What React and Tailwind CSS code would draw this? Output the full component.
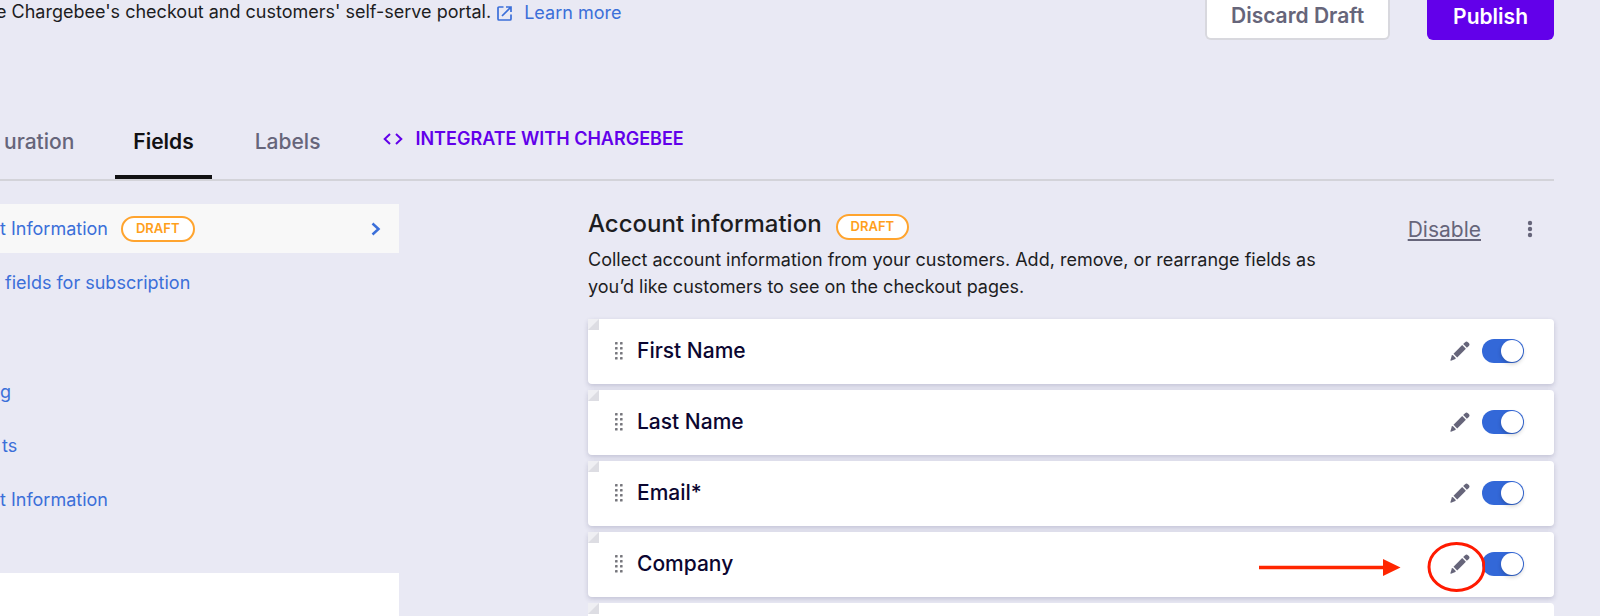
const fields = [
  { name: 'First Name' },
  { name: 'Last Name' },
  { name: 'Email*' },
  { name: 'Company', highlighted: true },
]

function OpenIcon() {
  return (
    <svg viewBox="0 0 15 15" className="h-[15px] w-[15px]" fill="none" stroke="currentColor" strokeWidth="1.7" aria-hidden="true">
      <path d="M6.500 1H2a1 1 0 0 0-1 1v11a1 1 0 0 0 1 1h11a1 1 0 0 0 1-1V8.500" />
      <path d="M9 1h5v5M14 1 5 10" />
    </svg>
  )
}

function CodeIcon() {
  return (
    <svg viewBox="0 0 20 12" className="h-3 w-5" fill="none" stroke="currentColor" strokeWidth="2" aria-hidden="true">
      <path d="M7 1 1.700 6 7 11M13 1l5.300 5L13 11" />
    </svg>
  )
}

function PencilIcon() {
  return (
    <svg viewBox="0 0 20 20" className="h-5 w-5" fill="currentColor" aria-hidden="true">
      <path d="M.4 19.300 1.800 14.400q.5-.7 1.200-.1l2.500 2.500q.6.700-.1 1.100L1 19.700q-.6.100-.6-.4z" />
      <path d="M3.500 12.800 12.200 4.100l3.700 3.700-8.700 8.700z" />
      <path d="m13.200 3.100 1.900-1.900a2 2 0 0 1 2.800 0l.9.9a2 2 0 0 1 0 2.800L16.900 6.800z" />
    </svg>
  )
}

function DragIcon() {
  return (
    <svg viewBox="0 0 8 18" className="h-[18px] w-2" fill="#77777d" aria-hidden="true">
      {[0, 5, 10, 15].map((y) => (
        <g key={y}>
          <rect x="0" y={y} width="2.6" height="2.6" rx=".6" />
          <rect x="5" y={y} width="2.6" height="2.6" rx=".6" />
        </g>
      ))}
    </svg>
  )
}

function DraftBadge() {
  return (
    <span className="flex h-[26px] items-center rounded-full border-2 border-[#ffa42e] bg-white px-[13px] text-[13px] font-semibold text-[#ff9f1c]">
      DRAFT
    </span>
  )
}

function Annotation() {
  return (
    <svg viewBox="0 0 226 50" className="pointer-events-none absolute right-[69px] top-[10px] h-[50px] w-[226px]" fill="none" aria-hidden="true">
      <path d="M0 25.500h125" stroke="#ff2600" strokeWidth="3.500" />
      <path d="M124 17v17L141.500 25.500z" fill="#ff2600" />
      <ellipse cx="197.500" cy="25" rx="27.500" ry="23.500" stroke="#ff1a00" strokeWidth="3" />
    </svg>
  )
}

function Fold() {
  return (
    <svg viewBox="0 0 11 11" className="absolute left-0 top-0 h-[11px] w-[11px]" aria-hidden="true">
      <path d="M0 0h11v11H0z" fill="#efeff3" />
      <path d="M11 0v11H0z" fill="#dddde3" />
    </svg>
  )
}

function FieldRow({ field }) {
  return (
    <li className="relative flex h-[65px] items-center rounded bg-white pl-[27px] pr-[30px] shadow-[0_2px_5px_rgba(40,40,90,0.2)]">
      <Fold />
      <DragIcon />
      <span className="ml-[14px] grow text-[21px] font-medium text-[#0b0630]">{field.name}</span>
      <button type="button" aria-label={`Edit ${field.name}`} className="mr-3 text-[#66657a]">
        <PencilIcon />
      </button>
      <label className="flex">
        <input type="checkbox" role="switch" defaultChecked aria-label={`Enable ${field.name}`} className="peer sr-only" />
        <span className="flex h-6 w-[42px] items-center justify-end rounded-full bg-[#3368d8] pr-px">
          <span className="h-[22px] w-[22px] rounded-full bg-white shadow-[0_2px_4px_rgba(0,0,0,0.2)]" />
        </span>
      </label>
      {field.highlighted && <Annotation />}
    </li>
  )
}

export default function App() {
  return (
    <div className="h-screen overflow-hidden bg-[#e9e9f4] pr-[46px] font-['Inter',sans-serif] text-[#1d1d1f]">
      <header className="flex items-start justify-between">
        <p className="-ml-1 flex items-start text-lg leading-6">
          <span>e Chargebee's checkout and customers' self-serve portal.</span>
          <a href="#learn" className="ml-1.5 flex items-center gap-3 pt-px text-[#3b6fd9]">
            <OpenIcon />
            Learn more
          </a>
        </p>
        <div className="flex gap-[37px]">
          <button type="button" className="h-10 rounded-b-md border-2 border-t-0 border-[#d8d8de] bg-white px-6 pb-1.5 text-[21px] font-semibold text-[#66657a]">
            Discard Draft
          </button>
          <button type="button" className="h-10 rounded-b-md bg-[#6200ea] px-[26px] pb-1.5 text-[21px] font-semibold text-white">
            Publish
          </button>
        </div>
      </header>

      <nav className="mt-16 flex h-[77px] items-stretch border-b-2 border-[#d3d3d9] text-[21px] font-medium text-[#66657a]">
        <a href="#configuration" className="flex items-center pl-1 pr-[41px]">uration</a>
        <a href="#fields" className="flex items-center border-b-4 border-[#111113] px-[18px] pt-1 font-semibold text-[#111113]">Fields</a>
        <a href="#labels" className="flex items-center px-[43px]">Labels</a>
        <a href="#integrate" className="ml-5 flex items-center gap-3 pb-1.5 text-lg font-semibold text-[#6200ea]">
          <CodeIcon />
          INTEGRATE WITH CHARGEBEE
        </a>
      </nav>

      <div className="flex items-start">
        <aside className="mt-[23px] w-[399px] shrink-0 text-lg text-[#3b6fd9]">
          <ul>
            <li className="flex h-[49px] items-center bg-[#f8f8f8] pr-[18px]">
              <a href="#account" className="flex grow items-center gap-[13px]">
                t Information
                <DraftBadge />
              </a>
              <svg viewBox="0 0 10 14" className="h-3.5 w-2.5" fill="none" stroke="currentColor" strokeWidth="2.500" aria-hidden="true">
                <path d="m1.500 1.500 6 5.500-6 5.500" />
              </svg>
            </li>
            <li className="mt-[3px] flex h-[54px] items-center pl-[5px]"><a href="#subscription">fields for subscription</a></li>
            <li className="mt-[55px] flex h-[54px] items-center"><a href="#billing">g</a></li>
            <li className="flex h-[54px] items-center pl-0.5"><a href="#payments">ts</a></li>
            <li className="flex h-[54px] items-center"><a href="#consent">t Information</a></li>
          </ul>
          <div className="mt-[46px] h-32 bg-white" />
        </aside>

        <main className="ml-[189px] mt-[27px] grow">
          <div className="flex items-start">
            <div className="flex grow items-end gap-[14px]">
              <h2 className="text-2xl font-medium">Account information</h2>
              <DraftBadge />
            </div>
            <button type="button" className="mt-1.5 text-[21px] text-[#66657a] underline">Disable</button>
            <button type="button" aria-label="More options" className="ml-[46px] mr-[21px] mt-3 text-[#66657a]">
              <svg viewBox="0 0 6 18" className="h-[18px] w-1.5" fill="currentColor" aria-hidden="true">
                <circle cx="3" cy="3" r="2.200" />
                <circle cx="3" cy="9" r="2.200" />
                <circle cx="3" cy="15" r="2.200" />
              </svg>
            </button>
          </div>
          <p className="max-w-[760px] text-lg leading-[27px]">
            Collect account information from your customers. Add, remove, or rearrange fields as you’d like customers to see on the checkout pages.
          </p>
          <ul className="mt-[19px] flex flex-col gap-1.5">
            {fields.map((field) => (
              <FieldRow key={field.name} field={field} />
            ))}
            <li className="relative h-[65px] rounded bg-white">
              <Fold />
            </li>
          </ul>
        </main>
      </div>
    </div>
  )
}
